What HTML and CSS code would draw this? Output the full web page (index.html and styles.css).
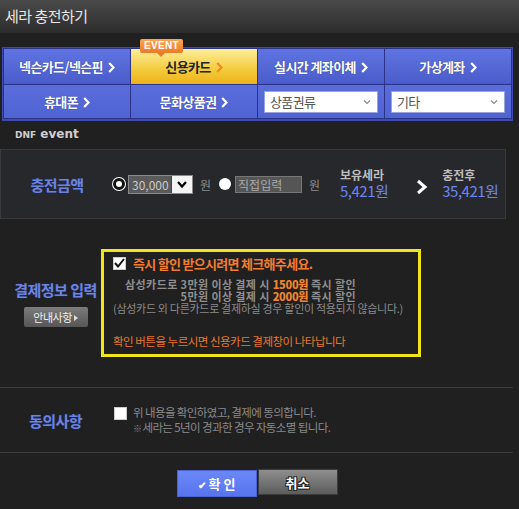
FILE: index.html
```html
<!doctype html>
<html>
    <head>
        <meta charset="utf-8">
        <title>세라 충전하기</title>
        <link rel="stylesheet" href="styles.css">
    </head>
    <body>
        <div class="titlebar">세라 충전하기</div>

        <div class="tabs">
            <div class="tab">넥슨카드/넥슨핀 <svg class="arr" width="7" height="11" viewBox="0 0 7 11"><path d="M1.2 1 L5.5 5.5 L1.2 10" fill="none" stroke="currentColor" stroke-width="2.2"/></svg></div>
            <div class="tab active">
                <span class="event">EVENT</span>
                신용카드 <svg class="arr" width="7" height="11" viewBox="0 0 7 11"><path d="M1.2 1 L5.5 5.5 L1.2 10" fill="none" stroke="currentColor" stroke-width="2.2"/></svg>
            </div>
            <div class="tab">실시간 계좌이체 <svg class="arr" width="7" height="11" viewBox="0 0 7 11"><path d="M1.2 1 L5.5 5.5 L1.2 10" fill="none" stroke="currentColor" stroke-width="2.2"/></svg></div>
            <div class="tab">가상계좌 <svg class="arr" width="7" height="11" viewBox="0 0 7 11"><path d="M1.2 1 L5.5 5.5 L1.2 10" fill="none" stroke="currentColor" stroke-width="2.2"/></svg></div>
            <div class="tab row2">휴대폰 <svg class="arr" width="7" height="11" viewBox="0 0 7 11"><path d="M1.2 1 L5.5 5.5 L1.2 10" fill="none" stroke="currentColor" stroke-width="2.2"/></svg></div>
            <div class="tab row2">문화상품권 <svg class="arr" width="7" height="11" viewBox="0 0 7 11"><path d="M1.2 1 L5.5 5.5 L1.2 10" fill="none" stroke="currentColor" stroke-width="2.2"/></svg></div>
            <div class="tab row2 selcell">
                <div class="fake-select"><span>상품권류</span>
                    <svg width="8" height="6" viewBox="0 0 8 6"><path d="M1 1.5 L4 4.5 L7 1.5" fill="none" stroke="#888" stroke-width="1.2"/></svg>
                </div>
            </div>
            <div class="tab row2 selcell">
                <div class="fake-select"><span>기타</span>
                    <svg width="8" height="6" viewBox="0 0 8 6"><path d="M1 1.5 L4 4.5 L7 1.5" fill="none" stroke="#888" stroke-width="1.2"/></svg>
                </div>
            </div>
        </div>

        <div class="game"><span class="dnf">DNF</span> event</div>

        <div class="charge">
            <div class="label">충전금액</div>
            <div class="options">
                <span class="radio checked"></span>
                <div class="amount">
                    <span class="val">30,000</span>
                    <span class="drop">
                        <svg width="12" height="9" viewBox="0 0 12 9"><path d="M2 2 L6 6.5 L10 2" fill="none" stroke="#000" stroke-width="2.2"/></svg>
                    </span>
                </div>
                <span class="won">원</span>
                <span class="radio"></span>
                <div class="direct">직접입력</div>
                <span class="won">원</span>
            </div>
            <div class="money">
                <div class="mlabel">보유세라</div>
                <div class="mval">5,421원</div>
            </div>
            <svg class="next" width="12" height="16" viewBox="0 0 12 16"><path d="M2 2 L9 8 L2 14" fill="none" stroke="#fff" stroke-width="3"/></svg>
            <div class="money">
                <div class="mlabel">충전후</div>
                <div class="mval">35,421원</div>
            </div>
        </div>

        <div class="payment">
            <div class="plabel">
                <div class="label">결제정보 입력</div>
                <div class="guide">안내사항 <span class="tri"></span></div>
            </div>
            <div class="notice">
                <div class="head"><span class="check on">
                    <svg width="11" height="10" viewBox="0 0 11 10"><path d="M1 5 L4 8.5 L10 1" fill="none" stroke="#111" stroke-width="2"/></svg>
                </span>즉시 할인 받으시려면 체크해주세요.</div>
                <div class="discount">
                    <div>삼성카드로 3만원 이상 결제 시 <b>1500원</b> 즉시 할인</div>
                    <div>5만원 이상 결제 시 <b>2000원</b> 즉시 할인</div>
                </div>
                <div class="small">(삼성카드 외 다른카드로 결제하실 경우 할인이 적용되지 않습니다.)</div>
                <div class="hint">확인 버튼을 누르시면 신용카드 결제창이 나타납니다</div>
            </div>
        </div>

        <div class="agree">
            <div class="label">동의사항</div>
            <span class="check"></span>
            <div class="agree-text">
                <div>위 내용을 확인하였고, 결제에 동의합니다.</div>
                <div><span class="mark">※</span>세라는 5년이 경과한 경우 자동소멸 됩니다.</div>
            </div>
        </div>

        <div class="buttons">
            <div class="btn ok"><span class="tick">✔</span> 확 인</div>
            <div class="btn cancel">취소</div>
        </div>
    </body>
</html>
```
FILE: styles.css
```css
body{
    margin: 0;
    width: 519px;
    height: 509px;
    overflow: hidden;
    background: #202020;
    font-family: "Noto Sans CJK KR", "Liberation Sans", sans-serif;
    font-size: 12px;
    color: #8c8c8c;
}

.titlebar{
    height: 33px;
    line-height: 32px;
    padding-left: 5px;
    background: linear-gradient(#4a4a4a, #2c2c2c);
    color: #e6e6e6;
    font-size: 15px;
    letter-spacing: -0.5px;
    margin-bottom: 14px;
}

/* payment method tabs */
.tabs{
    margin: 0 6px 0 2px;
    display: grid;
    grid-template-columns: repeat(4, 1fr);
    grid-template-rows: 35px 33px;
    gap: 1px;
    padding: 1px;
    background: #2b3386;
    border: 1px solid #3e4cb0;
    border-bottom-width: 2px;
}
.tab{
    position: relative;
    display: flex;
    align-items: center;
    justify-content: center;
    gap: 5px;
    background: linear-gradient(#5f74e2, #4a5cca);
    color: #fff;
    font-weight: bold;
    font-size: 13px;
    letter-spacing: -0.6px;
    text-shadow: 0 0 1px #2a3386;
}
.tab.row2{
    background: linear-gradient(#5a6ddb, #5063d2);
}
.tab .arr{
    margin-top: 1px;
}
.tab.active{
    background: linear-gradient(#fcee9a, #f3ca3a 60%, #eeb21a);
    color: #222;
    text-shadow: none;
}
.tab.active .arr{
    color: #f08a20;
}
.event{
    position: absolute;
    left: 9px;
    top: -10px;
    padding: 0 4px;
    height: 14px;
    line-height: 14px;
    font-family: "Liberation Sans", sans-serif;
    font-size: 10px;
    letter-spacing: 0.3px;
    color: #fff;
    text-shadow: none;
    background: linear-gradient(#fba755, #ec7a24);
    border-radius: 2px;
}
.event::after{
    content: "";
    position: absolute;
    left: 50%;
    bottom: -4px;
    margin-left: -4px;
    border: 4px solid transparent;
    border-bottom: 0;
    border-top-color: #ec7a24;
}
.selcell{
    padding: 0 6px;
}
.fake-select{
    flex: 1;
    height: 20px;
    background: #fff;
    border: 1px solid #9aa4dc;
    display: flex;
    align-items: center;
    justify-content: space-between;
    padding: 0 6px 0 5px;
    color: #555;
    font-weight: normal;
    font-size: 13px;
    text-shadow: none;
}

.game{
    padding: 6px 0 0 15px;
    height: 22px;
    color: #cfcfcf;
    font-family: "DejaVu Sans", sans-serif;
    font-weight: bold;
    font-size: 12px;
}
.game .dnf{
    font-size: 9px;
}

.label{
    color: #6c84de;
    font-weight: bold;
    font-size: 15px;
    letter-spacing: -0.5px;
    text-shadow: 0 0 2px #22306c;
}

/* charge amount */
.charge{
    margin-right: 13px;
    height: 68px;
    display: flex;
    align-items: center;
    background: #27282c;
    border: 1px solid #3a3a3c;
}
.charge .label{
    width: 112px;
    text-align: center;
}
.options{
    display: flex;
    align-items: center;
    width: 227px;
}
.radio{
    width: 12px;
    height: 12px;
    border-radius: 50%;
    background: #fff;
    box-sizing: border-box;
}
.radio.checked{
    border: 3px solid #111;
    box-shadow: 0 0 0 1px #fff;
}
.amount{
    margin-left: 3px;
    width: 65px;
    height: 19px;
    display: flex;
    background: #5a5a5a;
    border: 1px solid #8a8a8a;
    box-sizing: border-box;
    color: #c9c9c9;
    font-size: 12px;
    line-height: 17px;
}
.amount .val{
    flex: 1;
    padding-left: 3px;
}
.amount .drop{
    width: 20px;
    background: #f4f4f4;
    border-left: 1px solid #444;
    display: flex;
    align-items: center;
    justify-content: center;
}
.won{
    margin: 0 8px 0 7px;
    color: #8a8a8a;
}
.direct{
    margin-left: 4px;
    width: 67px;
    height: 17px;
    line-height: 16px;
    background: #555;
    border: 1px solid #777;
    box-sizing: border-box;
    color: #a8a8a8;
    font-size: 12px;
    padding-left: 2px;
}
.money .mlabel{
    color: #bdbdbd;
    font-weight: bold;
    font-size: 12px;
    line-height: 14px;
}
.money .mval{
    color: #6b86f0;
    font-size: 15px;
    line-height: 18px;
    letter-spacing: -0.5px;
}
.next{
    margin: 6px 14px 0 28px;
}

/* payment info */
.payment{
    height: 168px;
    display: flex;
    align-items: center;
    border-bottom: 1px solid #3a3a3a;
    margin-right: 6px;
}
.plabel{
    width: 101px;
    padding-left: 10px;
    box-sizing: border-box;
    display: flex;
    flex-direction: column;
    align-items: center;
    gap: 7px;
}
.guide{
    width: 64px;
    height: 20px;
    line-height: 20px;
    text-align: center;
    background: linear-gradient(#7c7c7c, #565656);
    border-radius: 2px;
    color: #f0f0f0;
    font-size: 11px;
    letter-spacing: -0.5px;
}
.guide .tri{
    display: inline-block;
    border: 3px solid transparent;
    border-right: 0;
    border-left: 4px solid #ddd;
    vertical-align: 1px;
}
.notice{
    width: 305px;
    height: 99px;
    border: 3px solid #f2e41c;
    padding: 3px 0 0 9px;
}
.head{
    display: flex;
    align-items: center;
    gap: 7px;
    color: #f27c30;
    font-weight: bold;
    font-size: 13px;
    letter-spacing: -0.7px;
    height: 16px;
}
.check{
    width: 13px;
    height: 13px;
    background: #fff;
    border: 1px solid #ccc;
    box-sizing: border-box;
    display: inline-flex;
    align-items: center;
    justify-content: center;
}
.discount{
    width: 243px;
    margin-top: 7px;
    text-align: right;
    color: #8f8f8f;
    font-weight: bold;
    font-size: 11px;
    line-height: 12px;
    letter-spacing: 0.4px;
}
.discount b{
    color: #f0842c;
    letter-spacing: -0.3px;
}
.small{
    line-height: 12px;
    color: #8a8a8a;
    font-size: 11px;
    letter-spacing: -0.3px;
}
.hint{
    margin-top: 19px;
    color: #e8782c;
    font-size: 11.5px;
    letter-spacing: -0.5px;
}

/* agreement */
.agree{
    height: 64px;
    display: flex;
    align-items: center;
    border-bottom: 1px solid #3a3a3a;
    margin-right: 6px;
}
.agree .label{
    width: 111px;
    text-align: center;
}
.agree .check{
    align-self: flex-start;
    margin: 19px 6px 0 3px;
}
.agree-text{
    color: #8a8a8a;
    font-size: 11.5px;
    line-height: 15px;
    letter-spacing: -0.6px;
}
.agree-text .mark{
    font-size: 9px;
    margin-right: 1px;
}

/* buttons */
.buttons{
    display: flex;
    justify-content: center;
    align-items: flex-start;
    gap: 1px;
    padding: 16px 5px 0 0;
}
.btn{
    width: 80px;
    height: 27px;
    line-height: 25px;
    box-sizing: border-box;
    text-align: center;
    color: #fff;
    font-weight: bold;
    font-size: 13px;
}
.btn.ok{
    margin-top: 1px;
    background: linear-gradient(#6b88f8, #5874ee);
    border: 1px solid #4a62d0;
}
.btn.ok .tick{
    font-size: 10px;
}
.btn.cancel{
    height: 26px;
    background: linear-gradient(#8e8e8e, #5c5c5c);
    border: 1px solid #3c3c3c;
    text-shadow: 1px 1px 0 #222, -1px -1px 0 #222, 1px -1px 0 #222, -1px 1px 0 #222;
}
```
